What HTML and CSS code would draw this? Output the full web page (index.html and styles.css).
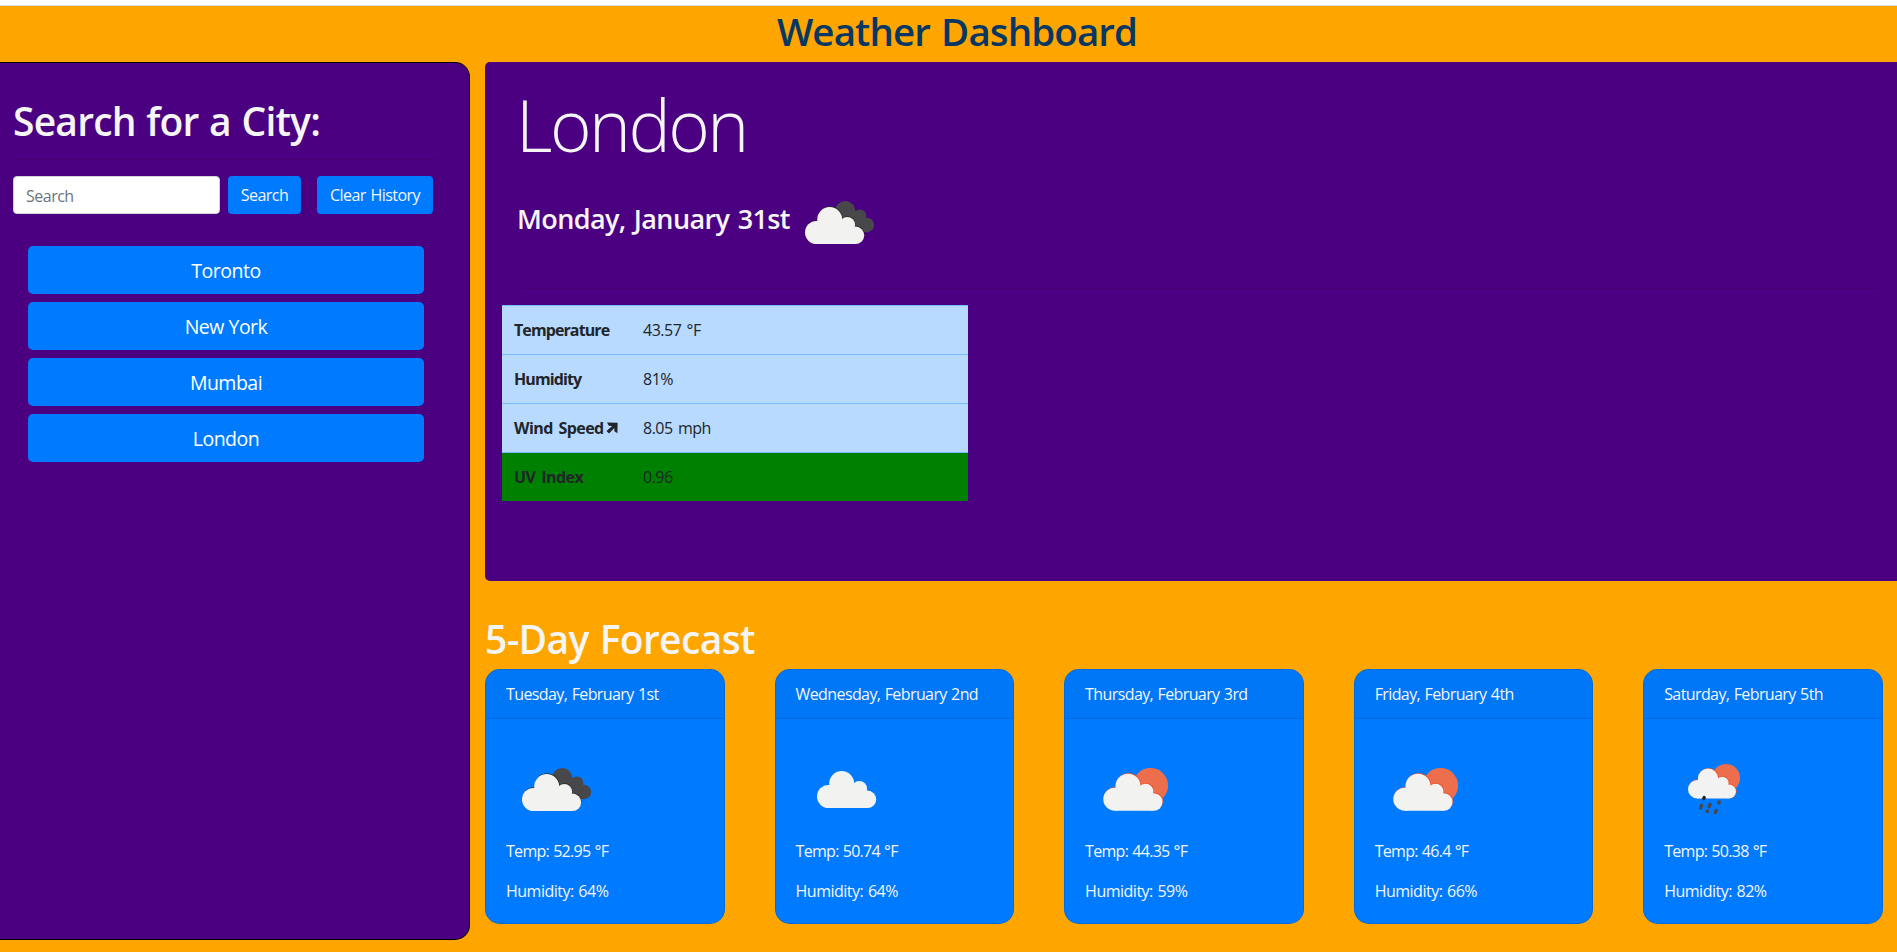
FILE: index.html
```html
<!DOCTYPE html>
<html lang="en">
<head>
<meta charset="utf-8">
<title>Weather Dashboard</title>
<link rel="stylesheet" href="styles.css">
</head>
<body>
<svg class="defs" width="0" height="0" aria-hidden="true">
  <defs>
    <g id="cloud"><circle cx="11.5" cy="25.5" r="11.5"/><circle cx="24.7" cy="12.5" r="12.5"/><circle cx="42.3" cy="17.8" r="7.8"/><circle cx="50.5" cy="28.3" r="8.7"/><path d="M11.5 37L13 12H36L44 20L50.5 37Z"/></g>
    <symbol id="broken" viewBox="0 0 70 44">
      <g fill="#48484a"><circle cx="40.2" cy="10.2" r="10.2"/><circle cx="54.8" cy="15" r="6.6"/><circle cx="62" cy="24" r="7.2"/><path d="M33 12L58 12L62 31L54 31Z"/></g>
      <use href="#cloud" transform="translate(.5 5.3)" fill="#2c2c2e"/>
      <use href="#cloud" transform="translate(0 6)" fill="#f2f2f0"/>
    </symbol>
    <symbol id="few" viewBox="0 0 70 44">
      <circle cx="47.5" cy="17.6" r="17.6" fill="#ec6e4c"/>
      <use href="#cloud" transform="translate(.9 4.9)" fill="#e9522c"/>
      <use href="#cloud" transform="translate(0.3 5.7)" fill="#f2f2f0"/>
    </symbol>
    <symbol id="scattered" viewBox="0 0 70 44">
      <use href="#cloud" fill="#f2f2f0"/>
    </symbol>
    <symbol id="rain" viewBox="0 0 70 52">
      <circle cx="38" cy="14" r="14" fill="#ec6e4c"/>
      <use href="#cloud" transform="translate(.8 4) scale(.81)" fill="#e9522c"/>
      <use href="#cloud" transform="translate(0 4.6) scale(.81)" fill="#f2f2f2"/>
      <g stroke="#48484a" stroke-width="3.4" stroke-linecap="round"><path d="M16.2 33.6l-.4.9" stroke="#222"/><path d="M13.6 41.4l-1 2.6M22.2 40.2l-1.2 2.6M31.2 38l-.4 1M19.4 47l-.2.6M28.2 46.6l-.8 2"/></g>
    </symbol>
  </defs>
</svg>
<div class="browser-edge"></div>
<header><h1 class="title">Weather Dashboard</h1></header>
<main class="layout">
  <aside class="sidebar">
    <h2 class="heading search-heading">Search for a City:</h2>
    <hr class="rule">
    <form class="search-form">
      <input class="search-input" type="text" placeholder="Search">
      <button class="btn btn-search" type="button">Search</button>
      <button class="btn btn-clear" type="button">Clear History</button>
    </form>
    <div class="history">
      <button class="city" type="button">Toronto</button>
      <button class="city" type="button">New York</button>
      <button class="city" type="button">Mumbai</button>
      <button class="city" type="button">London</button>
    </div>
  </aside>
  <div class="content">
    <section class="current">
      <h2 class="place">London</h2>
      <div class="today"><h3 class="date">Monday, January 31st</h3><svg class="today-icon" width="70" height="44"><use href="#broken"/></svg></div>
      <hr class="rule wide">
      <table class="stats">
        <tr><th>Temperature</th><td>43.57 °F</td></tr>
        <tr><th>Humidity</th><td>81%</td></tr>
        <tr><th><span class="wind">Wind Speed</span><svg class="arrow" width="12" height="12" viewBox="0 0 12 12"><path d="M1 0.5L11.6 0.8L11.4 11.2L8.4 9.2L8.3 6L3 11.5L0.5 9L6.2 4L2.8 3.8Z"/></svg></th><td>8.05 mph</td></tr>
        <tr class="uv"><th>UV Index</th><td>0.96</td></tr>
      </table>
    </section>
    <section>
      <h2 class="heading forecast-heading">5-Day Forecast</h2>
      <div class="cards">
        <article class="card"><div class="card-head">Tuesday, February 1st</div><div class="card-body"><div class="icon-box"><svg class="broken" width="70" height="44"><use href="#broken"/></svg></div><p>Temp: 52.95 °F</p><p>Humidity: 64%</p></div></article>
        <article class="card"><div class="card-head">Wednesday, February 2nd</div><div class="card-body"><div class="icon-box"><svg class="scattered" width="70" height="44"><use href="#scattered"/></svg></div><p>Temp: 50.74 °F</p><p>Humidity: 64%</p></div></article>
        <article class="card"><div class="card-head">Thursday, February 3rd</div><div class="card-body"><div class="icon-box"><svg class="few" width="70" height="44"><use href="#few"/></svg></div><p>Temp: 44.35 °F</p><p>Humidity: 59%</p></div></article>
        <article class="card"><div class="card-head">Friday, February 4th</div><div class="card-body"><div class="icon-box"><svg class="few" width="70" height="44"><use href="#few"/></svg></div><p>Temp: 46.4 °F</p><p>Humidity: 66%</p></div></article>
        <article class="card"><div class="card-head">Saturday, February 5th</div><div class="card-body"><div class="icon-box"><svg class="rain" width="70" height="52"><use href="#rain"/></svg></div><p>Temp: 50.38 °F</p><p>Humidity: 82%</p></div></article>
      </div>
    </section>
  </div>
</main>
</body>
</html>
```
FILE: styles.css
```css
* { box-sizing: border-box; }
body {
  margin: 0;
  height: 952px;
  overflow: hidden;
  background: orange;
  color: #212529;
  font: 400 16px/24px "Open Sans", "Noto Sans", sans-serif;
}
h1, h2, h3, p { margin: 0; }
.defs { display: none; }
.browser-edge { height: 6px; background: #fff; border-bottom: 1px solid #dcdde0; }
.title {
  height: 56px;
  padding-left: 17px;
  text-align: center;
  color: #073763;
  font-size: 38.5px;
  font-weight: 600;
  line-height: 50px;
  letter-spacing: -0.9px;
  word-spacing: 2px;
}
.layout { display: flex; gap: 15px; }
.sidebar {
  width: 470px;
  height: 878px;
  padding: 34px 31px 0 13px;
  background: indigo;
  border: 1px solid #000;
  border-left: 0;
  border-radius: 0 15px 15px 0;
}
.heading { color: #f5f5f5; font-size: 39px; font-weight: 600; line-height: 48px; }
.search-heading { letter-spacing: -0.8px; word-spacing: 1.2px; }
.rule { height: 1px; margin: 0; border: 0; background: rgba(0, 0, 0, .1); }
.sidebar .rule { margin: 14px 0 16px; }
.search-form { display: flex; }
.search-input {
  width: 207px;
  height: 38px;
  padding: 8px 12px 6px;
  border: 1px solid #ced4da;
  border-radius: 4px;
  background: #fff;
  font: inherit;
  letter-spacing: -0.5px;
}
.search-input::placeholder { color: #6c757d; opacity: 1; }
.btn, .city { padding: 0; border: 0; border-radius: 4px; background: #007bff; color: #fff; font: inherit; }
.btn { height: 38px; color: #f5f5f5; letter-spacing: -0.55px; word-spacing: 1px; }
.btn-search { width: 73px; margin-left: 8px; }
.btn-clear { width: 116px; margin-left: 16px; }
.history { display: grid; gap: 8px; width: 396px; margin: 32px 0 0 15px; }
.city { height: 48px; padding-top: 2px; font-size: 19.5px; letter-spacing: -0.5px; border-radius: 5px; }
.content { flex: 1; }
.current { height: 519px; padding: 20px 0 0 17px; background: indigo; border-radius: 5px 0 0 5px; }
.place { padding-left: 14px; color: #f5f5f5; font-size: 71px; font-weight: 300; line-height: 86px; letter-spacing: -2.5px; }
.today { display: flex; height: 72px; margin-top: 26px; padding-left: 15px; }
.date { width: 288px; color: #f5f5f5; font-size: 27px; font-weight: 600; line-height: 50px; letter-spacing: -0.6px; word-spacing: 1.8px; white-space: nowrap; }
.today-icon { margin-top: 7px; }
.wide { margin: 22px 16px 16px 15px; }
.stats { width: 466px; border-collapse: collapse; table-layout: fixed; background: #b8daff; }
.stats th, .stats td { height: 49px; padding: 0 12px; border-top: 1px solid #7abaff; text-align: left; letter-spacing: -0.5px; word-spacing: 1.6px; }
.stats th { width: 129px; font-weight: 700; white-space: nowrap; letter-spacing: -0.9px; word-spacing: 2px; }
.stats .wind { letter-spacing: -0.55px; }
.stats .uv th, .stats .uv td { height: 48px; background: green; letter-spacing: -0.5px; }
.arrow { margin-left: 2px; fill: #212529; }
.forecast-heading { height: 54px; margin-top: 34px; line-height: 48px; letter-spacing: -0.65px; word-spacing: 1.5px; }
.cards { display: flex; justify-content: space-between; padding-right: 14px; }
.card { width: 239.8px; height: 255px; overflow: hidden; border: 1px solid rgba(0, 0, 0, .125); border-radius: 15px; background: #007bff; color: #f5f5f5; letter-spacing: -0.6px; word-spacing: .8px; }
.card-head { height: 49px; padding: 12px 20px; background: rgba(0, 0, 0, .03); border-bottom: 1px solid rgba(0, 0, 0, .125); white-space: nowrap; }
.card-body { padding: 20px; }
.icon-box { height: 100px; padding: 29px 0 0 16px; }
.icon-box svg { display: block; }
.icon-box .scattered { margin: 3px 0 0 5px; }
.icon-box .few { margin-left: 2px; }
.icon-box .rain { margin: -4px 0 0 8px; }
.card-body p { margin-bottom: 16px; letter-spacing: -0.7px; word-spacing: .6px; }
.card-body p:last-child { letter-spacing: -0.5px; word-spacing: 1px; }
```
